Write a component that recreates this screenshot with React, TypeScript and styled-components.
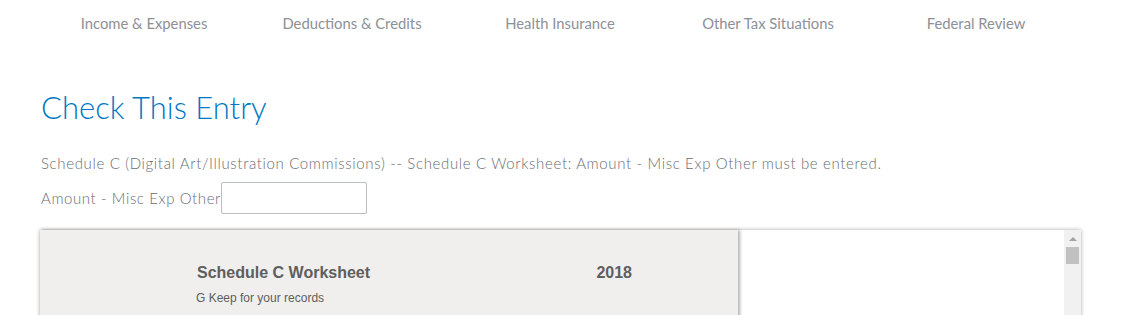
import styled, { createGlobalStyle } from "styled-components";

const GlobalStyle = createGlobalStyle`
    body {
        margin: 0;
        background: #fff;
        font-family: Lato, "Open Sans", sans-serif;
    }
`;

const Page = styled.div`
    width: 1041px;
    margin-left: 40px;
`;

const Nav = styled.nav`
    display: grid;
    grid-template-columns: repeat(5, 208px);
    height: 46px;
    align-items: center;
`;

const NavItem = styled.div`
    text-align: center;
    font-size: 14.8px;
    color: #8d9096;
    padding-bottom: 1px;
`;

const Title = styled.h1`
    margin: 43px 0 0 1px;
    font-size: 31px;
    font-weight: 300;
    color: #0077c5;
    line-height: 36px;
`;

const Message = styled.p`
    margin: 28px 0 0 1px;
    font-size: 15px;
    font-weight: 300;
    color: #6b6c72;
    line-height: 20px;
    letter-spacing: 0.65px;
`;

const FieldRow = styled.div`
    display: flex;
    align-items: center;
    margin: 9px 0 0 1px;
`;

const FieldLabel = styled.label`
    font-size: 15px;
    font-weight: 300;
    color: #6b6c72;
    letter-spacing: 0.6px;
`;

const TextInput = styled.input`
    width: 146px;
    height: 32px;
    box-sizing: border-box;
    border: 1px solid #babec5;
    border-radius: 2px;
    padding: 0 6px;
    margin: 0;
`;

const Worksheet = styled.div`
    display: flex;
    margin-top: 16px;
    height: 100px;
    box-shadow: 0 0 4px rgba(0, 0, 0, 0.35);
`;

const FormPane = styled.div`
    width: 698px;
    background: #f0efed;
    box-shadow: 2px 0 3px rgba(0, 0, 0, 0.3);
    position: relative;
    z-index: 1;
    padding: 34px 0 0 156px;
    box-sizing: border-box;
    font-family: "Liberation Sans", Arial, sans-serif;
    color: #5e5e5e;
`;

const FormHead = styled.div`
    display: flex;
    width: 435px;
    justify-content: space-between;
    font-size: 16px;
    font-weight: bold;
    padding-left: 1px;
`;

const FormNote = styled.div`
    margin-top: 9px;
    font-size: 12px;
`;

const SidePane = styled.div`
    flex: 1;
    display: flex;
    justify-content: flex-end;
    background: #fff;
`;

const Scrollbar = styled.div`
    width: 17px;
    background: #f1f1f1;
    display: flex;
    flex-direction: column;
    align-items: center;
`;

const ArrowUp = styled.div`
    margin-top: 7px;
    width: 0;
    height: 0;
    border-left: 4px solid transparent;
    border-right: 4px solid transparent;
    border-bottom: 4px solid #a3a3a3;
`;

const Thumb = styled.div`
    margin-top: 6px;
    width: 13px;
    height: 17px;
    background: #c1c1c1;
`;

export default function App() {
    const steps = ["Income & Expenses", "Deductions & Credits", "Health Insurance", "Other Tax Situations", "Federal Review"];
    return (
        <>
            <GlobalStyle />
            <Page>
                <Nav>
                    {steps.map((s) => (
                        <NavItem key={s}>{s}</NavItem>
                    ))}
                </Nav>
                <Title>Check This Entry</Title>
                <Message>
                    Schedule C (Digital Art/Illustration Commissions) -- Schedule C Worksheet: Amount - Misc Exp Other must be entered.
                </Message>
                <FieldRow>
                    <FieldLabel htmlFor="misc">Amount - Misc Exp Other</FieldLabel>
                    <TextInput id="misc" type="text" />
                </FieldRow>
                <Worksheet>
                    <FormPane>
                        <FormHead>
                            <span>Schedule C Worksheet</span>
                            <span>2018</span>
                        </FormHead>
                        <FormNote>G Keep for your records</FormNote>
                    </FormPane>
                    <SidePane>
                        <Scrollbar>
                            <ArrowUp />
                            <Thumb />
                        </Scrollbar>
                    </SidePane>
                </Worksheet>
            </Page>
        </>
    );
}
